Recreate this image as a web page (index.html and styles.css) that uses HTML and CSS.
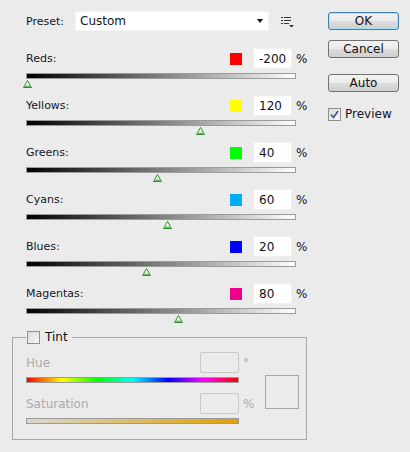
FILE: index.html
```html
<!DOCTYPE html>
<html lang="en">
<head>
  <meta charset="UTF-8">
  <title>Black &amp; White</title>
  <link rel="stylesheet" href="styles.css">
</head>
<body>

<div class="dialog">
  <div class="main">
    <div class="preset-row">
      <label class="preset-label">Preset:</label>
      <div class="select">
        <span>Custom</span>
        <span class="caret"></span>
      </div>
      <svg class="preset-menu" width="13" height="11" viewBox="0 0 13 11">
        <rect x="0" y="0" width="2" height="1" fill="#333"/>
        <rect x="3" y="0" width="7" height="1" fill="#333"/>
        <rect x="0" y="3" width="2" height="1" fill="#333"/>
        <rect x="3" y="3" width="7" height="1" fill="#333"/>
        <rect x="0" y="6" width="2" height="1" fill="#333"/>
        <rect x="3" y="6" width="5" height="1" fill="#333"/>
        <polygon points="8,8 13,8 10.5,10.5" fill="#333"/>
      </svg>
    </div>

    <div class="sliders">
      <div class="slider">
        <div class="slider-head">
          <span class="slider-label">Reds:</span>
          <span class="swatch swatch-red"></span>
          <input class="num" type="text" value="-200">
          <span class="unit">%</span>
        </div>
        <div class="track"></div>
        <div class="thumb-lane">
          <svg class="thumb" style="left: 0%" width="9" height="8" viewBox="0 0 9 8"><polygon points="4.5,0.5 8.5,7.5 0.5,7.5" fill="#f4fbf2" stroke="#2f8a2f"/><rect x="1" y="5.5" width="7" height="1.5" fill="#6cc06c"/></svg>
        </div>
      </div>

      <div class="slider">
        <div class="slider-head">
          <span class="slider-label">Yellows:</span>
          <span class="swatch swatch-yellow"></span>
          <input class="num" type="text" value="120">
          <span class="unit">%</span>
        </div>
        <div class="track"></div>
        <div class="thumb-lane">
          <svg class="thumb" style="left: 64%" width="9" height="8" viewBox="0 0 9 8"><polygon points="4.5,0.5 8.5,7.5 0.5,7.5" fill="#f4fbf2" stroke="#2f8a2f"/><rect x="1" y="5.5" width="7" height="1.5" fill="#6cc06c"/></svg>
        </div>
      </div>

      <div class="slider">
        <div class="slider-head">
          <span class="slider-label">Greens:</span>
          <span class="swatch swatch-green"></span>
          <input class="num" type="text" value="40">
          <span class="unit">%</span>
        </div>
        <div class="track"></div>
        <div class="thumb-lane">
          <svg class="thumb" style="left: 48%" width="9" height="8" viewBox="0 0 9 8"><polygon points="4.5,0.5 8.5,7.5 0.5,7.5" fill="#f4fbf2" stroke="#2f8a2f"/><rect x="1" y="5.5" width="7" height="1.5" fill="#6cc06c"/></svg>
        </div>
      </div>

      <div class="slider">
        <div class="slider-head">
          <span class="slider-label">Cyans:</span>
          <span class="swatch swatch-cyan"></span>
          <input class="num" type="text" value="60">
          <span class="unit">%</span>
        </div>
        <div class="track"></div>
        <div class="thumb-lane">
          <svg class="thumb" style="left: 52%" width="9" height="8" viewBox="0 0 9 8"><polygon points="4.5,0.5 8.5,7.5 0.5,7.5" fill="#f4fbf2" stroke="#2f8a2f"/><rect x="1" y="5.5" width="7" height="1.5" fill="#6cc06c"/></svg>
        </div>
      </div>

      <div class="slider">
        <div class="slider-head">
          <span class="slider-label">Blues:</span>
          <span class="swatch swatch-blue"></span>
          <input class="num" type="text" value="20">
          <span class="unit">%</span>
        </div>
        <div class="track"></div>
        <div class="thumb-lane">
          <svg class="thumb" style="left: 44%" width="9" height="8" viewBox="0 0 9 8"><polygon points="4.5,0.5 8.5,7.5 0.5,7.5" fill="#f4fbf2" stroke="#2f8a2f"/><rect x="1" y="5.5" width="7" height="1.5" fill="#6cc06c"/></svg>
        </div>
      </div>

      <div class="slider">
        <div class="slider-head">
          <span class="slider-label">Magentas:</span>
          <span class="swatch swatch-magenta"></span>
          <input class="num" type="text" value="80">
          <span class="unit">%</span>
        </div>
        <div class="track"></div>
        <div class="thumb-lane">
          <svg class="thumb" style="left: 56%" width="9" height="8" viewBox="0 0 9 8"><polygon points="4.5,0.5 8.5,7.5 0.5,7.5" fill="#f4fbf2" stroke="#2f8a2f"/><rect x="1" y="5.5" width="7" height="1.5" fill="#6cc06c"/></svg>
        </div>
      </div>
    </div>

    <fieldset class="tint">
      <legend class="tint-legend">
        <span class="check"></span>
        <span>Tint</span>
      </legend>
      <div class="tint-fields">
        <div class="field">
          <div class="field-head">
            <span class="field-label">Hue</span>
            <input class="num num-off" type="text" disabled>
            <span class="field-unit">°</span>
          </div>
          <div class="bar bar-hue"></div>
        </div>
        <div class="field field-sat">
          <div class="field-head">
            <span class="field-label">Saturation</span>
            <input class="num num-off" type="text" disabled>
            <span class="field-unit">%</span>
          </div>
          <div class="bar bar-sat"></div>
        </div>
      </div>
      <div class="tint-swatch"></div>
    </fieldset>
  </div>

  <div class="side">
    <button class="btn btn-default">OK</button>
    <button class="btn btn-cancel">Cancel</button>
    <button class="btn btn-auto">Auto</button>
    <div class="preview">
      <span class="check check-on">
        <svg width="9" height="9" viewBox="0 0 9 9"><path d="M1 4.5 L3.5 7.5 L8 1" fill="none" stroke="#3b4f8f" stroke-width="1.6"/></svg>
      </span>
      <span>Preview</span>
    </div>
  </div>
</div>

</body>
</html>
```

FILE: styles.css
```css
body {
  margin: 0;
  background-color: #ebebeb;
  font-family: "DejaVu Sans", Verdana, sans-serif;
  font-size: 11px;
  color: #14142a;
}
.dialog {
  display: flex;
  padding: 11px 0 0 12px;
}
.main {
  width: 295px;
}
.preset-row {
  display: flex;
  align-items: center;
  height: 20px;
  padding-left: 14px;
}
.preset-label {
  width: 49px;
}
.select {
  display: flex;
  align-items: center;
  justify-content: space-between;
  width: 194px;
  height: 20px;
  box-sizing: border-box;
  padding: 0 4px 0 4px;
  background-color: #fff;
  border: 1px solid #f4f4f4;
  font-size: 12px;
}
.caret {
  width: 0;
  height: 0;
  border-left: 3.5px solid transparent;
  border-right: 3.5px solid transparent;
  border-top: 4px solid #111;
  margin-right: 1px;
}
.preset-menu {
  margin-left: 12px;
  margin-top: 3px;
}

/* channel sliders */
.sliders {
  margin-top: 17px;
}
.slider {
  padding-left: 14px;
}
.slider-head {
  display: flex;
  align-items: center;
  height: 21px;
  width: 284px;
}
.slider-label {
  flex: 1;
}
.swatch {
  width: 12px;
  height: 12px;
  margin-right: 11px;
}
.swatch-red { background-color: #ff0000; }
.swatch-yellow { background-color: #ffff00; }
.swatch-green { background-color: #00ff00; }
.swatch-cyan { background-color: #00aeef; }
.swatch-blue { background-color: #0000ff; }
.swatch-magenta { background-color: #ec008c; }
.num {
  width: 39px;
  height: 21px;
  box-sizing: border-box;
  padding: 0 5px;
  margin: 0;
  border: 1px solid #f0f0f0;
  background-color: #fff;
  font-family: inherit;
  font-size: 12px;
  color: #111;
  outline: none;
}
.unit {
  width: 14px;
  padding-left: 4px;
  font-size: 12px;
}
.track {
  width: 270px;
  height: 6px;
  box-sizing: border-box;
  margin-top: 4px;
  border: 1px solid #9b9b9b;
  background: linear-gradient(to right, #000, #fff);
}
.thumb-lane {
  position: relative;
  width: 270px;
  height: 16px;
}
.thumb {
  position: absolute;
  top: 1px;
  margin-left: -3px;
}

/* tint group */
.tint {
  display: flex;
  margin: 0;
  padding: 8px 0 15px 13px;
  border: 1px solid #a8a8a8;
  min-width: 0;
}
.tint-legend {
  display: flex;
  align-items: center;
  padding: 0 4px 0 1px;
  font-size: 12px;
  color: #111;
}
.tint-legend .check {
  margin-right: 5px;
}
.check {
  display: inline-flex;
  align-items: center;
  justify-content: center;
  width: 11px;
  height: 11px;
  border: 1px solid #8e8f8f;
  background: linear-gradient(135deg, #dcdcdc, #f7f7f7);
}
.tint-fields {
  width: 235px;
}
.field-sat {
  margin-top: 10px;
}
.field-head {
  display: flex;
  align-items: center;
  height: 21px;
}
.field-label {
  flex: 1;
  color: #aaaaaa;
  font-size: 12px;
}
.num-off {
  background-color: #ebebeb;
  border: 1px solid #c9c9c9;
  border-radius: 2px;
}
.field-unit {
  width: 18px;
  padding-left: 4px;
  color: #aaaaaa;
  font-size: 12px;
}
.bar {
  width: 213px;
  height: 6px;
  box-sizing: border-box;
  margin-top: 4px;
  border: 1px solid #9b9b9b;
}
.bar-hue {
  background: linear-gradient(to right, #f00, #ff0, #0f0, #0ff, #00f, #f0f, #f00);
}
.bar-sat {
  background: linear-gradient(to right, #ddd8cc, #e0a000);
}
.tint-swatch {
  width: 34px;
  height: 34px;
  box-sizing: border-box;
  margin: 23px 0 0 4px;
  border: 1px solid #a8a8a8;
}

/* buttons */
.side {
  display: flex;
  flex-direction: column;
  width: 71px;
  margin-left: 21px;
  padding-top: 1px;
}
.btn {
  height: 18px;
  padding: 0;
  border: 1px solid #707070;
  border-radius: 3px;
  background: linear-gradient(#f2f2f2, #ebebeb 50%, #dddddd 50%, #cfcfcf);
  font-family: inherit;
  font-size: 12px;
  color: #111;
}
.btn-default {
  border-color: #3c7fb1;
  box-shadow: inset 0 0 0 1px #a6e1f7;
}
.btn-cancel {
  margin-top: 10px;
}
.btn-auto {
  margin-top: 16px;
}
.preview {
  display: flex;
  align-items: center;
  gap: 4px;
  margin-top: 15px;
  font-size: 12px;
}
```
